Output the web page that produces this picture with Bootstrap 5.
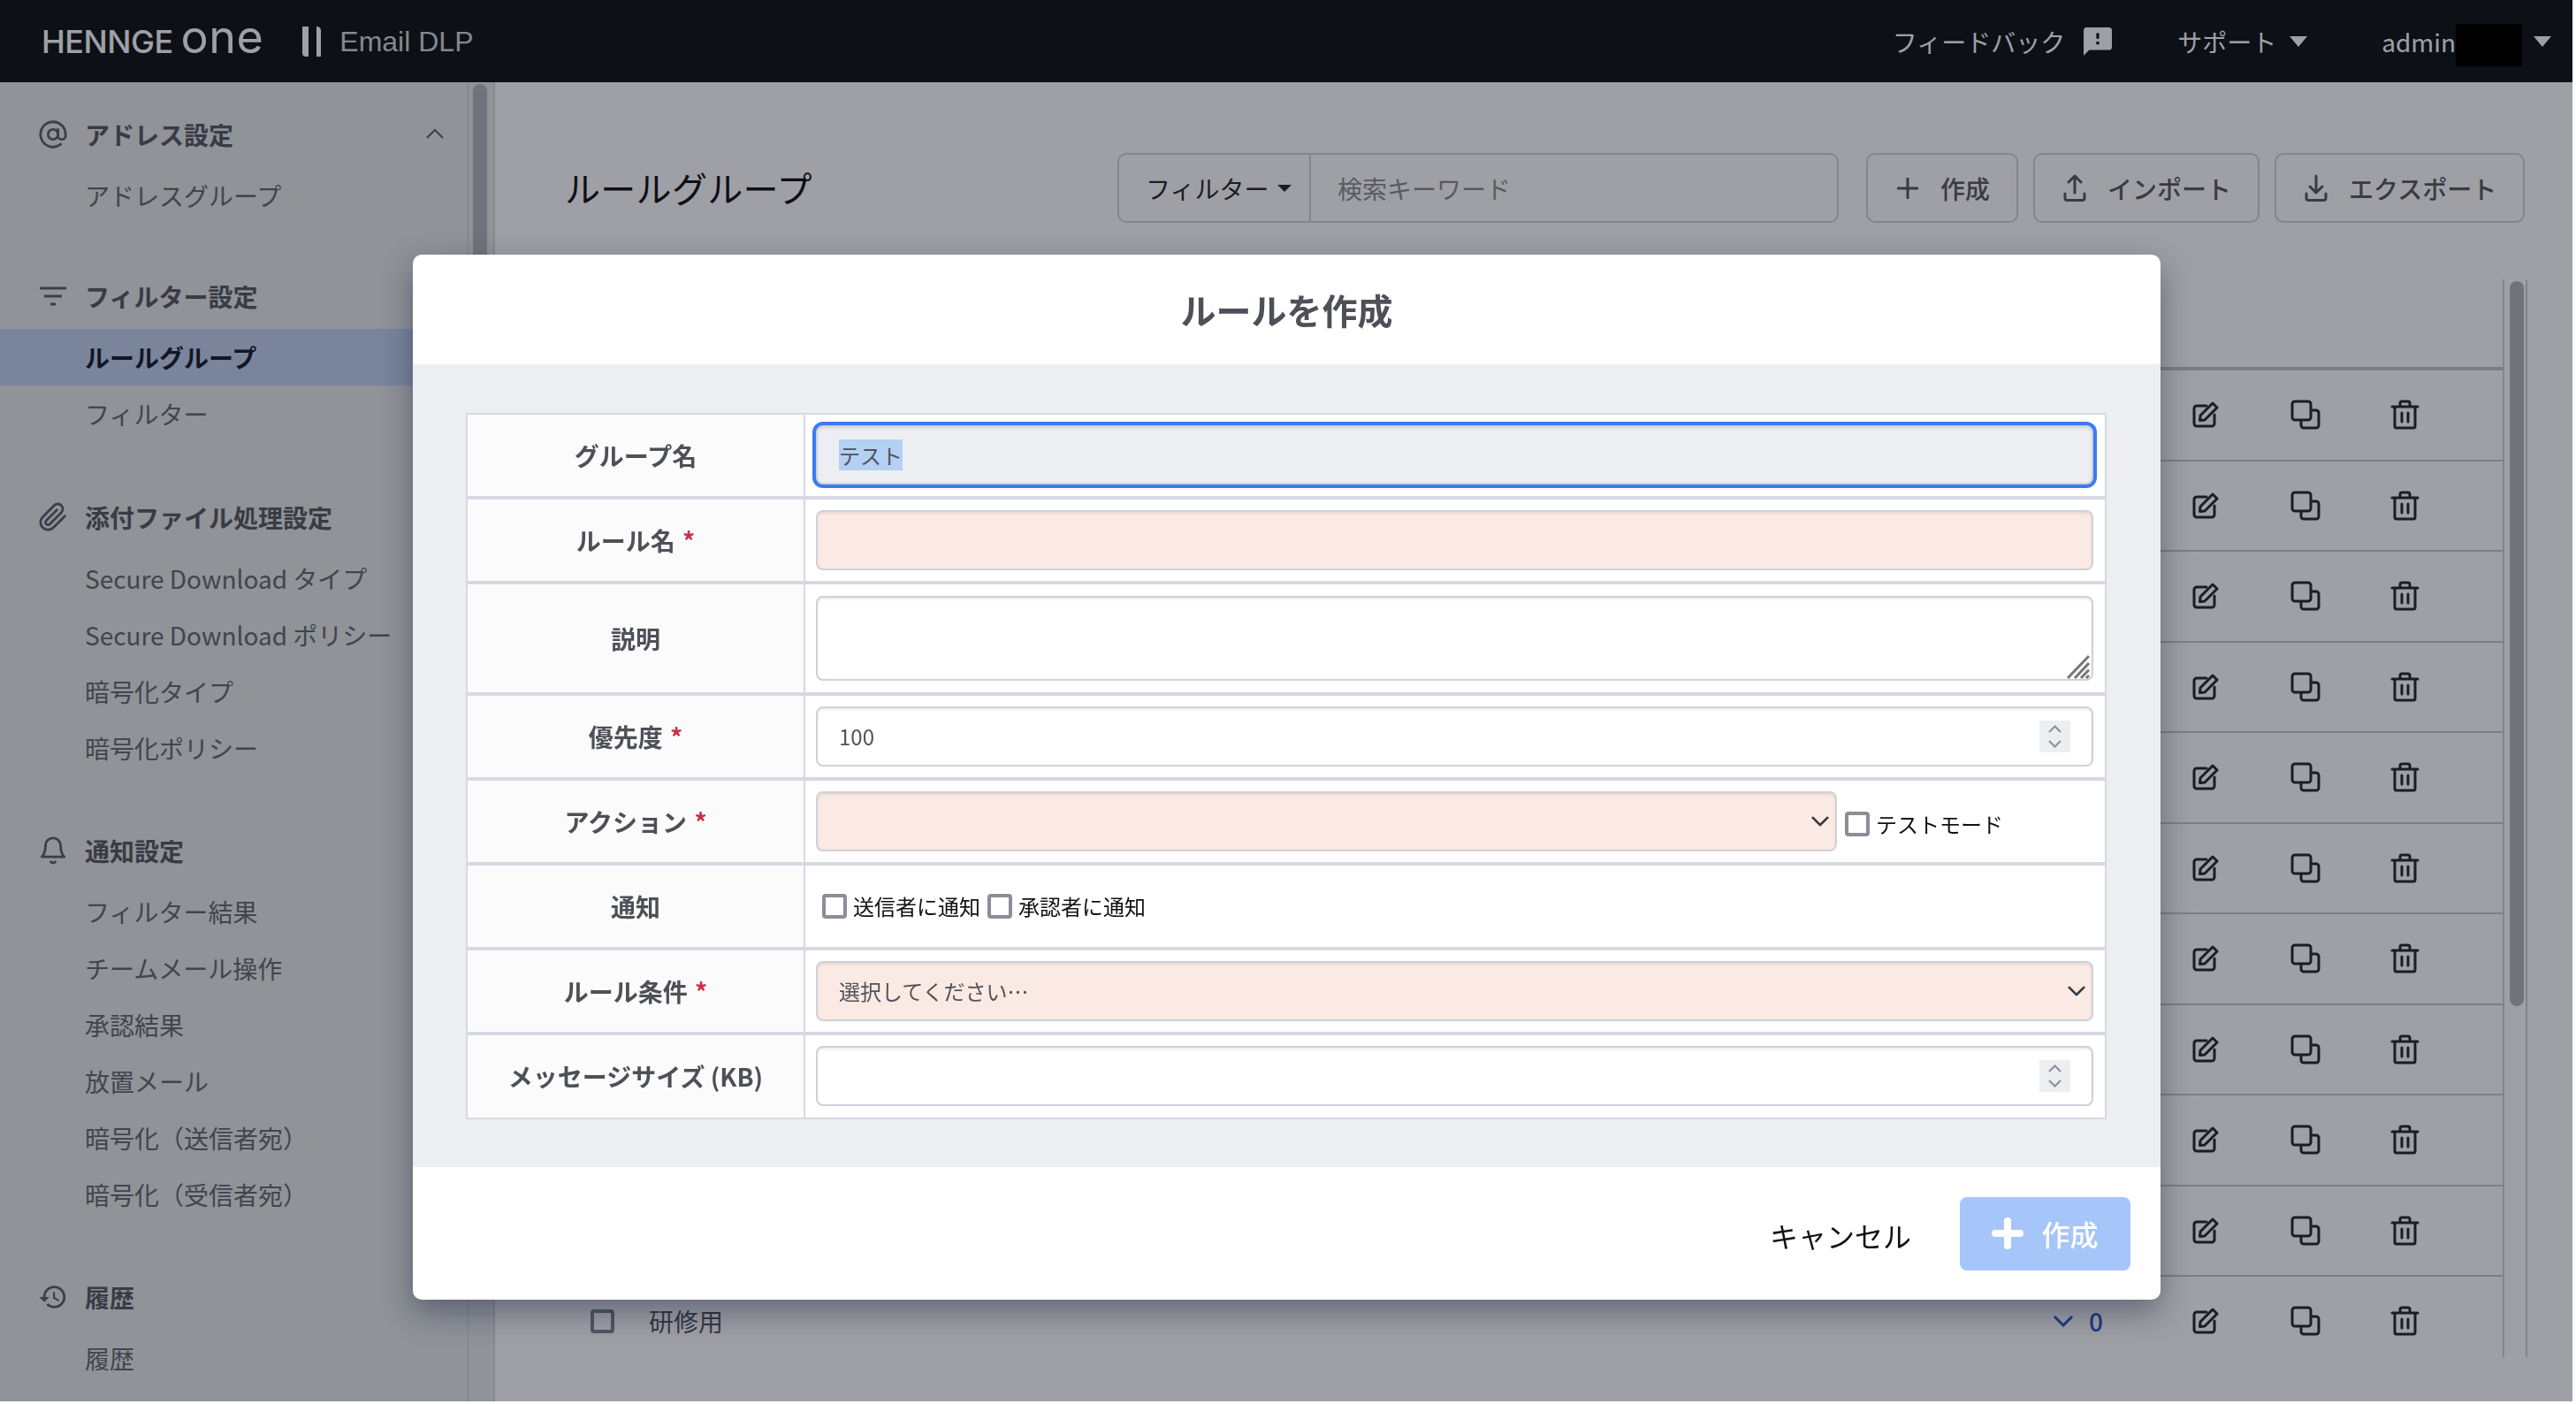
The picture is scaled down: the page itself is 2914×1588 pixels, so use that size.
<!DOCTYPE html>
<html lang="ja">
<head>
<meta charset="utf-8">
<title>ルールグループ</title>
<link rel="stylesheet" href="https://cdn.jsdelivr.net/npm/bootstrap@5.3.0/dist/css/bootstrap.min.css">
<style>
html,body{height:100%;margin:0;background:#fff;overflow:hidden}
body{font-family:"Noto Sans CJK JP","Noto Sans",sans-serif;font-size:28px;color:#23262b}
.app-shell{width:2910px;height:1585px;display:flex;flex-direction:column;background:#fff;overflow:hidden}
.top-bar{height:93px;background:#0d1012;color:#fff;flex:none;padding:0 0 0 47px}
.logo-text{margin-bottom:9px}
.logo-a{font-family:Inter,"Liberation Sans",sans-serif;font-size:36px;font-weight:500;letter-spacing:-.5px;line-height:1;color:#fff}
.logo-b{font-family:Inter,"Liberation Sans",sans-serif;font-size:52px;font-weight:400;line-height:1;margin-left:9px;letter-spacing:.5px;color:#fff}
.logo-bars{margin:0 20px 0 44px;display:block}
.product{font-family:"Liberation Sans",Arial,sans-serif;font-size:32px;color:#d5d6d9}
.top-item{font-size:28px;color:#fff;display:flex;align-items:center}
.feed-item{margin-right:74px;gap:21px}
.sup-item{margin-right:84px;gap:15px}
.adm-item{margin-right:24px}
.redact{width:75px;height:48px;background:#000;position:relative;z-index:2000;display:block;margin-top:9px}
.tri{width:0;height:0;border-left:10px solid transparent;border-right:10px solid transparent;border-top:12px solid #fff;display:block}
.tri-adm{margin-left:13px}
.body-row{flex:1;min-height:0}
.side-wrap{width:560px;flex:none;background:#e6e9e9;border-right:2px solid #d5d8d9;overflow:hidden}
.side-menu{width:528px;padding-top:25px;flex:none}
.side-track{width:30px;flex:none;border-left:2px solid #d5d8d9;padding:2px 5px}
.side-thumb{width:16px;height:600px;background:#b3b5b8;border-radius:8px}
.menu-group{margin-bottom:49px}
.menu-group:nth-child(-n+1){margin-bottom:48px}
.menu-group:nth-child(2){margin-bottom:50px}
.menu-head{height:72px;padding:0 0 3px 43px;font-weight:700;color:#555860;gap:19px;position:relative}
.menu-group:nth-child(-n+2) .menu-head{height:71px}
.menu-ico{width:34px;height:34px;flex:none;color:#5b5e66}
.menu-chev{position:absolute;left:482px;top:27px;width:20px;height:12px}
.nav-link.menu-link{height:64px;padding:0 0 0 96px;color:#64676f;font-size:28px;display:flex;align-items:center}
.nav-link.menu-link.is-on{background:#c1d3f0;color:#14192a;font-weight:700}
.main-pane{flex:1;min-width:0;padding:80px 51px 0 79px;background:#fff}
.page-title{font-size:40px;font-weight:400;color:#0c0e12;margin:0;flex:1;line-height:79px;letter-spacing:.3px}
.tool-row{height:79px;margin:0 3px 64px 0;gap:17px}
.search-box{width:816px;margin-right:14px;height:79px}
.search-box .btn,.search-box .form-control{border:2px solid #d0d2d5;font-size:28px;background:#fff}
.search-box .btn{width:219px;color:#23262b;display:flex;align-items:center;gap:10px;padding:0 0 0 30px;border-radius:10px 0 0 10px}
.search-box .form-control{padding:0 30px;border-radius:0 10px 10px 0;margin-left:-2px!important}
.search-box .form-control::placeholder{color:#8a8b8f}
.tri-dark{border-left-width:8px;border-right-width:8px;border-top-width:8px;border-top-color:#23262b}
.tool-btn{height:79px;border:2px solid #d0d2d5;border-radius:10px;background:#fff;color:#54585e;font-size:28px;font-weight:500;display:flex;align-items:center;padding:0 0 0 32px;flex:none}
.tool-btn svg{margin-right:24px;flex:none}
.btn-make{width:172px}
.btn-imp{width:256px}
.btn-exp{width:283px}
.list-wrap{height:1219px;overflow:hidden}
.list-area{flex:1;min-width:0}
.list-head{height:103px;border-bottom:4px solid #c3c8ca;flex:none}
.list-row{height:102.5px;border-bottom:2px solid #c3c8ca;padding-left:29px;flex:none}
.row-check.form-check-input{width:27px;height:27px;border:4px solid #7f8290;border-radius:4px;margin:0 39px 0 0;flex:none;background-color:#fff}
.row-name{flex:1;color:#4f5258;font-size:28px}
.row-count{color:#2a55c0;font-weight:500;gap:17px;margin-right:59px}
.act-cell{width:113px;display:flex;justify-content:center;flex:none}
.act-end{width:54px;flex:none}
.list-track{width:28px;flex:none;border-left:2px solid #cfd2d5;border-right:2px solid #cfd2d5;padding:2px 6px}
.list-thumb{width:16px;height:820px;background:#b3b5b8;border-radius:8px}
.modal-backdrop.dim-layer{--bs-backdrop-bg:#0f121e;--bs-backdrop-opacity:.4;width:2910px;height:1585px}
.rule-dialog.modal-dialog{max-width:none;width:1977px;margin:288px 0 0 467px}
.rule-content.modal-content{border:0;border-radius:10px;box-shadow:0 14px 36px rgba(20,24,60,.42);height:1182px;overflow:hidden}
.rule-head.modal-header{height:124px;justify-content:center;border:0;padding:0;flex:none}
.rule-title.modal-title{font-size:40px;font-weight:700;color:#4e5057;line-height:1}
.rule-body.modal-body{background:#edeef2;padding:55px 60px;flex:none;height:908px}
.rule-foot.modal-footer{height:150px;border:0;padding:0 34px 0 0;gap:55px;flex:none;align-items:center}
.rule-foot.modal-footer>*{margin:0}
.table.rule-table{width:1856px;table-layout:fixed;margin:0;--bs-table-bg:#fff;border-collapse:collapse}
.table.rule-table>tbody>tr>*{padding:0 13px 0 12px;border:2px solid #d6d9e2;height:96px;vertical-align:middle}
.table.rule-table>tbody>tr+tr>*{border-top:4px solid #d6d9e2}
.table.rule-table>tbody>tr>th{--bs-table-bg:#fbfbfc;text-align:center;font-size:28px;font-weight:700;color:#4e5057;width:382px;padding:0}
.table.rule-table>tbody>tr:first-child>*{height:94.5px}
.table.rule-table>tbody>tr.tall>*{height:126px}
.req{color:#c8304a;margin-left:2px}
.field.form-control,.field.form-select{font-size:24px;color:#50535a;height:68px;border:2px solid #ced1d9;border-radius:8px;padding:0 24px;box-shadow:inset 0 2px 3px rgba(0,0,0,.08);background-color:#fff}
.field.field-on.form-control{background-color:#edeef2;box-shadow:0 0 0 4px #3a7bf5,inset 0 2px 3px rgba(0,0,0,.08);height:67px}
.field.field-on::selection{background:#b4d0f4;color:#50535a}
.field.field-err{background-color:#fbe9e4}
.field.form-select{background-position:right 6px center;background-size:22px 22px;padding-right:40px}
textarea.field.form-control{height:96px;resize:none;padding-top:10px;display:block}
.spin-wrap{position:relative}
.spin-ico{position:absolute;right:26px;top:16px;width:35px;height:36px;background:#eceef1;pointer-events:none}
.grip-ico{position:absolute;right:4px;bottom:2px;width:26px;height:28px;pointer-events:none}
input[type=number].field{-moz-appearance:textfield}
input[type=number].field::-webkit-inner-spin-button{display:none}
.act-select.form-select{width:1155px;flex:none}
.chk-line{font-size:24px;color:#111;gap:7px;margin:0}
.box-chk.form-check-input{width:28px;height:28px;border:4px solid #8c8d98;border-radius:4px;margin:0;flex:none;background-color:#fff}
.mode-line{margin-left:9px;margin-top:6px}
.notice-row{padding-left:7px;gap:8px}
.cancel-btn.btn{font-size:32px;color:#111;padding:0;text-decoration:none;border:0;margin-top:4px}
.make-btn.btn{width:193px;height:83px;background:#a6c6f9;border:0;color:#fff;font-size:32px;font-weight:500;opacity:1;border-radius:8px;display:flex;align-items:center;justify-content:center;gap:20px;padding:0}
</style>
</head>
<body>
<div class="app-shell">
  <nav class="navbar top-bar d-flex align-items-center flex-nowrap">
    <div class="d-flex align-items-center">
      <div class="d-flex align-items-baseline logo-text"><span class="logo-a">HENNGE</span><span class="logo-b">one</span></div>
      <svg class="logo-bars" width="22" height="34" viewBox="0 0 22 34" aria-hidden="true"><path d="M0 0h7v34H4a4 4 0 0 1-4-4z" fill="#fff"/><path d="M16 0a5 5 0 0 1 5 4v30h-5z" fill="#fff"/></svg>
      <span class="product">Email DLP</span>
    </div>
    <div class="d-flex align-items-center ms-auto">
      <div class="top-item feed-item">フィードバック
        <svg width="32" height="32" viewBox="2 2 20 20" fill="#fff"><path d="M20 2H4c-1.1 0-1.99.9-1.99 2L2 22l4-4h14c1.1 0 2-.9 2-2V4c0-1.1-.9-2-2-2zm-7 12h-2v-2h2v2zm0-4h-2V6h2v4z"/></svg>
      </div>
      <div class="top-item sup-item">サポート<span class="tri"></span></div>
      <div class="top-item adm-item">admin<span class="redact"></span><span class="tri tri-adm"></span></div>
    </div>
  </nav>
  <div class="body-row d-flex">
    <aside class="side-wrap d-flex">
      <div class="side-menu">
        <div class="menu-group">
          <div class="menu-head d-flex align-items-center">
            <svg class="menu-ico" viewBox="0 0 24 24" fill="none" stroke="currentColor" stroke-width="2" stroke-linecap="round"><circle cx="12" cy="12" r="4"/><path d="M16 8v5a3 3 0 0 0 6 0v-1a10 10 0 1 0-3.92 7.94"/></svg>アドレス設定
            <svg class="menu-chev" viewBox="0 0 20 12" fill="none" stroke="#5b5e66" stroke-width="2"><path d="M1 11l9-9 9 9"/></svg>
          </div>
          <nav class="nav flex-column"><a class="nav-link menu-link">アドレスグループ</a></nav>
        </div>
        <div class="menu-group">
          <div class="menu-head d-flex align-items-center">
            <svg class="menu-ico" viewBox="0 0 34 34" fill="none" stroke="currentColor" stroke-width="3"><path d="M2 8h30M7 17h20M14 26h6"/></svg>フィルター設定
          </div>
          <nav class="nav flex-column"><a class="nav-link menu-link is-on">ルールグループ</a><a class="nav-link menu-link">フィルター</a></nav>
        </div>
        <div class="menu-group">
          <div class="menu-head d-flex align-items-center">
            <svg class="menu-ico" viewBox="0 0 24 24" fill="none" stroke="currentColor" stroke-width="2" stroke-linecap="round" stroke-linejoin="round"><path d="M21.44 11.05l-9.19 9.19a6 6 0 0 1-8.49-8.49l9.19-9.19a4 4 0 0 1 5.66 5.66l-9.2 9.19a2 2 0 0 1-2.83-2.83l8.49-8.48"/></svg>添付ファイル処理設定
          </div>
          <nav class="nav flex-column"><a class="nav-link menu-link">Secure Download タイプ</a><a class="nav-link menu-link">Secure Download ポリシー</a><a class="nav-link menu-link">暗号化タイプ</a><a class="nav-link menu-link">暗号化ポリシー</a></nav>
        </div>
        <div class="menu-group">
          <div class="menu-head d-flex align-items-center">
            <svg class="menu-ico" viewBox="0 0 24 24" fill="none" stroke="currentColor" stroke-width="2" stroke-linecap="round" stroke-linejoin="round"><path d="M18 8A6 6 0 0 0 6 8c0 7-3 9-3 9h18s-3-2-3-9"/><path d="M13.73 21a2 2 0 0 1-3.46 0"/></svg>通知設定
          </div>
          <nav class="nav flex-column"><a class="nav-link menu-link">フィルター結果</a><a class="nav-link menu-link">チームメール操作</a><a class="nav-link menu-link">承認結果</a><a class="nav-link menu-link">放置メール</a><a class="nav-link menu-link">暗号化（送信者宛）</a><a class="nav-link menu-link">暗号化（受信者宛）</a></nav>
        </div>
        <div class="menu-group">
          <div class="menu-head d-flex align-items-center">
            <svg class="menu-ico" viewBox="0 0 24 24" fill="currentColor"><path d="M13 3a9 9 0 0 0-9 9H1l3.89 3.89.07.14L9 12H6c0-3.87 3.13-7 7-7s7 3.13 7 7-3.13 7-7 7c-1.93 0-3.68-.79-4.94-2.06l-1.42 1.42A8.954 8.954 0 0 0 13 21a9 9 0 0 0 0-18zm-1 5v5l4.28 2.54.72-1.21-3.5-2.08V8H12z"/></svg>履歴
          </div>
          <nav class="nav flex-column"><a class="nav-link menu-link">履歴</a></nav>
        </div>
      </div>
      <div class="side-track"><div class="side-thumb"></div></div>
    </aside>
    <main class="main-pane">
      <div class="d-flex align-items-center tool-row">
        <h1 class="page-title">ルールグループ</h1>
        <div class="input-group search-box flex-nowrap">
          <button class="btn" type="button">フィルター<span class="tri tri-dark"></span></button>
          <input class="form-control" type="text" placeholder="検索キーワード">
        </div>
        <button class="tool-btn btn-make" type="button"><svg width="26" height="26" viewBox="0 0 26 26" fill="none" stroke="#54585e" stroke-width="3"><path d="M13 1v24M1 13h24"/></svg>作成</button>
        <button class="tool-btn btn-imp" type="button"><svg width="26" height="31" viewBox="0 0 26 31" fill="none" stroke="#54585e" stroke-width="3" stroke-linecap="round" stroke-linejoin="round"><path d="M13 21V2M6 9l7-7 7 7M2 22v5a2.5 2.5 0 0 0 2.5 2.5h17A2.5 2.5 0 0 0 24 27v-5"/></svg>インポート</button>
        <button class="tool-btn btn-exp" type="button"><svg width="26" height="31" viewBox="0 0 26 31" fill="none" stroke="#54585e" stroke-width="3" stroke-linecap="round" stroke-linejoin="round"><path d="M13 2v19M6 14l7 7 7-7M2 22v5a2.5 2.5 0 0 0 2.5 2.5h17A2.5 2.5 0 0 0 24 27v-5"/></svg>エクスポート</button>
      </div>
      <div class="d-flex list-wrap">
        <div class="list-area d-flex flex-column" id="rows">
          <div class="list-head"></div>
        </div>
        <div class="list-track"><div class="list-thumb"></div></div>
      </div>
    </main>
  </div>
</div>

<template id="row-tpl">
  <div class="list-row d-flex align-items-center">
    <input class="form-check-input row-check" type="checkbox">
    <span class="row-name"></span>
    <span class="row-count d-flex align-items-center"><svg width="24" height="14" viewBox="0 0 24 14" fill="none" stroke="#2a55c0" stroke-width="3"><path d="M2 2l10 10L22 2"/></svg>0</span>
    <span class="act-cell"><svg width="30" height="30" viewBox="0 0 30 30" fill="none" stroke="#23262b" stroke-width="3" stroke-linecap="round" stroke-linejoin="round"><path d="M16 5H5a3 3 0 0 0-3 3v17a3 3 0 0 0 3 3h17a3 3 0 0 0 3-3V15"/><path d="M9 16l-.5 5.500L14 21 28 7l-5-5z"/></svg></span>
    <span class="act-cell"><svg width="34" height="34" viewBox="0 0 34 34" fill="none" stroke="#23262b" stroke-width="3" stroke-linejoin="round"><rect x="2" y="2" width="21" height="21" rx="3"/><path d="M23 12h6a3 3 0 0 1 3 3v14a3 3 0 0 1-3 3H15a3 3 0 0 1-3-3v-6"/></svg></span>
    <span class="act-cell"><svg width="33" height="34" viewBox="0 0 33 34" fill="none" stroke="#23262b" stroke-width="3" stroke-linecap="round" stroke-linejoin="round"><path d="M2 8h29M11 8V4a2 2 0 0 1 2-2h7a2 2 0 0 1 2 2v4M5 8v22a2 2 0 0 0 2 2h19a2 2 0 0 0 2-2V8M13 15v10M20 15v10"/></svg></span>
    <span class="act-end"></span>
  </div>
</template>

<div class="modal-backdrop dim-layer fade show"></div>
<div class="modal fade show d-block" tabindex="-1" role="dialog" aria-modal="true">
  <div class="modal-dialog rule-dialog">
    <div class="modal-content rule-content">
      <div class="modal-header rule-head"><h5 class="modal-title rule-title">ルールを作成</h5></div>
      <div class="modal-body rule-body">
        <table class="table rule-table">
          <tbody>
            <tr><th>グループ名</th><td><input id="grp" class="form-control field field-on" type="text" value="テスト"></td></tr>
            <tr><th>ルール名 <span class="req">*</span></th><td><input class="form-control field field-err" type="text"></td></tr>
            <tr class="tall"><th>説明</th><td><div class="spin-wrap"><textarea class="form-control field"></textarea><svg class="grip-ico" viewBox="0 0 26 28" fill="none" stroke="#777" stroke-width="3"><path d="M1 27L25 2M9 27L25 10M16 27l9-9.500M22 27l3-3"/></svg></div></td></tr>
            <tr><th>優先度 <span class="req">*</span></th><td><div class="spin-wrap"><input class="form-control field" type="number" value="100"><svg class="spin-ico" viewBox="0 0 35 36" fill="none" stroke="#8d8f99" stroke-width="2"><path d="M11 13l6.500-6.500L24 13M11 23l6.500 6.500L24 23"/></svg></div></td></tr>
            <tr><th>アクション <span class="req">*</span></th><td><div class="d-flex align-items-center"><select class="form-select field field-err act-select"><option></option></select><label class="chk-line mode-line d-flex align-items-center"><input class="form-check-input box-chk" type="checkbox">テストモード</label></div></td></tr>
            <tr><th>通知</th><td><div class="d-flex align-items-center notice-row"><label class="chk-line d-flex align-items-center"><input class="form-check-input box-chk" type="checkbox">送信者に通知</label><label class="chk-line d-flex align-items-center"><input class="form-check-input box-chk" type="checkbox">承認者に通知</label></div></td></tr>
            <tr><th>ルール条件 <span class="req">*</span></th><td><select class="form-select field field-err"><option>選択してください…</option></select></td></tr>
            <tr><th>メッセージサイズ (KB)</th><td><div class="spin-wrap"><input class="form-control field" type="number"><svg class="spin-ico" viewBox="0 0 35 36" fill="none" stroke="#8d8f99" stroke-width="2"><path d="M11 13l6.500-6.500L24 13M11 23l6.500 6.500L24 23"/></svg></div></td></tr>
          </tbody>
        </table>
      </div>
      <div class="modal-footer rule-foot">
        <button class="btn btn-link cancel-btn" type="button">キャンセル</button>
        <button class="btn btn-primary make-btn" type="button" disabled><svg width="36" height="36" viewBox="0 0 36 36" fill="none" stroke="#fff" stroke-width="8" stroke-linecap="round"><path d="M18 4v28M4 18h28"/></svg>作成</button>
      </div>
    </div>
  </div>
</div>
<script src="https://cdn.jsdelivr.net/npm/bootstrap@5.3.0/dist/js/bootstrap.bundle.min.js"></script>
<script>
var host=document.getElementById('rows'),tpl=document.getElementById('row-tpl');
for(var i=0;i<11;i++){
  var n=tpl.content.cloneNode(true);
  if(i===10){n.querySelector('.row-name').textContent='研修用';}
  else{n.querySelector('.row-count').remove();n.querySelector('.row-check').remove();}
  host.appendChild(n);
}
var g=document.getElementById('grp');g.focus();g.select();
</script>
</body>
</html>
